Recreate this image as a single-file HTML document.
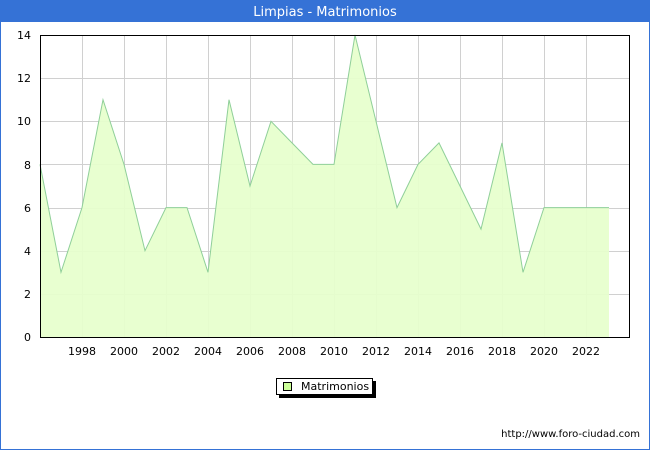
<!DOCTYPE html>
<html><head><meta charset="utf-8"><style>
html,body{margin:0;padding:0;background:#fff}
svg{display:block}
text{font-family:"DejaVu Sans","Liberation Sans",sans-serif;font-size:11px;fill:#000}
</style></head><body>
<svg width="650" height="450" viewBox="0 0 650 450" xmlns="http://www.w3.org/2000/svg">
<rect x="0.5" y="0.5" width="649" height="449" fill="#fff" stroke="#3572d6"/>
<rect x="0" y="0" width="650" height="22" fill="#3572d6"/>
<text x="325" y="16" text-anchor="middle" style="fill:#fff;font-size:13px">Limpias - Matrimonios</text>
<g stroke="#d0d0d0" stroke-width="1">
<line x1="82.5" y1="35" x2="82.5" y2="337"/><line x1="124.5" y1="35" x2="124.5" y2="337"/>
<line x1="166.5" y1="35" x2="166.5" y2="337"/><line x1="208.5" y1="35" x2="208.5" y2="337"/>
<line x1="250.5" y1="35" x2="250.5" y2="337"/><line x1="292.5" y1="35" x2="292.5" y2="337"/>
<line x1="334.5" y1="35" x2="334.5" y2="337"/><line x1="376.5" y1="35" x2="376.5" y2="337"/>
<line x1="418.5" y1="35" x2="418.5" y2="337"/><line x1="460.5" y1="35" x2="460.5" y2="337"/>
<line x1="502.5" y1="35" x2="502.5" y2="337"/><line x1="544.5" y1="35" x2="544.5" y2="337"/>
<line x1="586.5" y1="35" x2="586.5" y2="337"/>
<line x1="40" y1="294.5" x2="630" y2="294.5"/><line x1="40" y1="251.5" x2="630" y2="251.5"/>
<line x1="40" y1="208.5" x2="630" y2="208.5"/><line x1="40" y1="164.5" x2="630" y2="164.5"/>
<line x1="40" y1="121.5" x2="630" y2="121.5"/><line x1="40" y1="78.5" x2="630" y2="78.5"/>
</g>
<polygon fill="#e6ffcc" fill-opacity="0.92" stroke="none" points="40,337 40,164.4 61,272.3 82,207.6 103,99.7 124,164.4 145,250.7 166,207.6 187,207.6 208,272.3 229,99.7 250,186 271,121.3 292,142.9 313,164.4 334,164.4 355,35 376,121.3 397,207.6 418,164.4 439,142.9 460,186 481,229.1 502,142.9 523,272.3 544,207.6 565,207.6 586,207.6 609,207.6 609,337"/>
<polyline fill="none" stroke="#8fcf99" stroke-width="1" points="40,164.4 61,272.3 82,207.6 103,99.7 124,164.4 145,250.7 166,207.6 187,207.6 208,272.3 229,99.7 250,186 271,121.3 292,142.9 313,164.4 334,164.4 355,35 376,121.3 397,207.6 418,164.4 439,142.9 460,186 481,229.1 502,142.9 523,272.3 544,207.6 565,207.6 586,207.6 609,207.6"/>
<rect x="40.5" y="35.5" width="589" height="302" fill="none" stroke="#000"/>
<g text-anchor="end">
<text x="31" y="341">0</text><text x="31" y="298">2</text><text x="31" y="255">4</text>
<text x="31" y="212">6</text><text x="31" y="169">8</text><text x="31" y="125">10</text>
<text x="31" y="82">12</text><text x="31" y="39">14</text>
</g>
<g text-anchor="middle">
<text x="82" y="355">1998</text><text x="124" y="355">2000</text><text x="166" y="355">2002</text>
<text x="208" y="355">2004</text><text x="250" y="355">2006</text><text x="292" y="355">2008</text>
<text x="334" y="355">2010</text><text x="376" y="355">2012</text><text x="418" y="355">2014</text>
<text x="460" y="355">2016</text><text x="502" y="355">2018</text><text x="544" y="355">2020</text>
<text x="586" y="355">2022</text>
</g>
<rect x="279" y="381" width="97" height="17" fill="#000"/>
<rect x="276.5" y="378.5" width="96" height="16" fill="#fff" stroke="#000"/>
<rect x="283.5" y="382.5" width="8" height="8" fill="#ccff99" stroke="#000"/>
<text x="301" y="390">Matrimonios</text>
<text x="640" y="437" text-anchor="end" style="font-size:10px">http://www.foro-ciudad.com</text>
</svg>
</body></html>
